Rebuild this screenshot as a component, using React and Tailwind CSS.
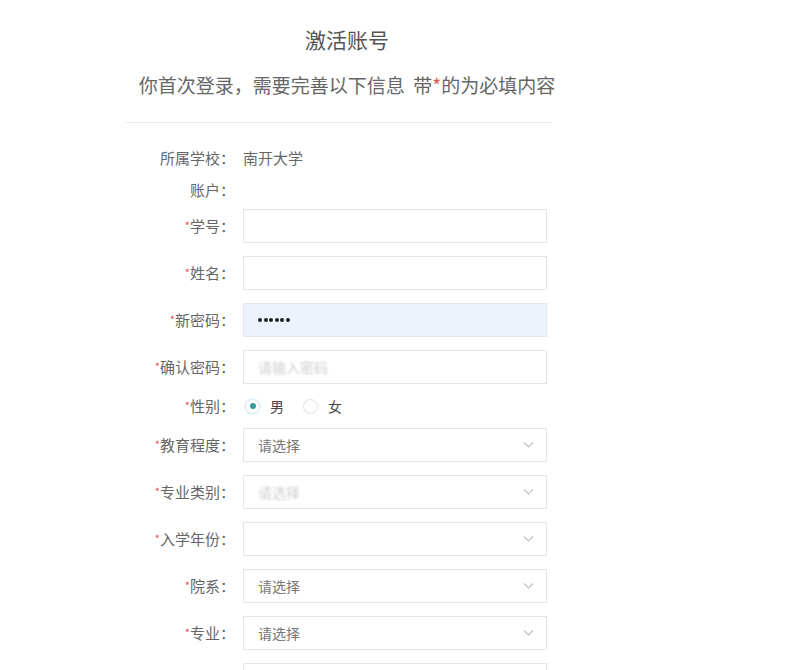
import React from 'react';

const font = { fontFamily: '"Noto Sans CJK SC", "Noto Sans", sans-serif' };

function Label({ text, required }) {
  return (
    <div className="w-[110px] shrink-0 text-right text-[15px] text-[#666] leading-6">
      {required && <span className="text-[#e0575b] text-[11px] align-top relative top-[-1px]">*</span>}
      {text && `${text}：`}
    </div>
  );
}

function Chevron() {
  return (
    <svg width="11" height="7" viewBox="0 0 11 7" className="absolute right-[12px] top-1/2 -translate-y-1/2">
      <path d="M1 1l4.5 4.5L10 1" fill="none" stroke="#c0c0c0" strokeWidth="1.1" />
    </svg>
  );
}

function InputRow({ label, value, filled, password, select, faded, required = true }) {
  return (
    <div className="flex items-center mt-[13px]">
      <Label text={label} required={required} />
      <div
        className={`relative ml-[8px] w-[304px] h-[34px] border border-[#e6e6e6] flex items-center px-[14px] text-[14px] ${
          filled ? 'bg-[#edf3fd]' : 'bg-white'
        }`}
      >
        {password && (
          <div className="flex gap-[1.5px]">
            {[0, 1, 2, 3, 4, 5].map((i) => (
              <span key={i} className="w-[4px] h-[4px] rounded-full bg-[#222]" />
            ))}
          </div>
        )}
        {value && <span className="text-[#777]">{value}</span>}
        {faded && <span className="text-[#cfcfcf] blur-[1px]">{faded}</span>}
        {select && <Chevron />}
      </div>
    </div>
  );
}

export default function App() {
  return (
    <div className="min-h-screen bg-white pl-[125px] pt-[25px]" style={font}>
      <div className="w-[444px] text-center">
        <h1 className="text-[21px] leading-7 text-[#555] font-normal">激活账号</h1>
        <p className="mt-[19px] text-[19px] leading-[26px] text-[#666]">
          你首次登录，需要完善以下信息&nbsp;&nbsp;带<span className="text-[#e0575b]">*</span>的为必填内容
        </p>
      </div>
      <div className="mt-[24px] w-[427px] h-px bg-[#ededed]" />

      <div className="mt-[23px] flex items-center">
        <Label text="所属学校" />
        <div className="ml-[8px] text-[15px] text-[#666] leading-6">南开大学</div>
      </div>
      <div className="mt-[8px] flex items-center">
        <Label text="账户" />
      </div>

      <div className="mt-[-6px]">
        <InputRow label="学号" />
        <InputRow label="姓名" />
        <InputRow label="新密码" filled password />
        <InputRow label="确认密码" faded="请输入密码" />

        <div className="flex items-center mt-[13px] h-[18px]">
          <Label text="性别" required />
          <div className="ml-[10px] flex items-center text-[14px] text-[#444]">
            <span className="w-[15px] h-[15px] rounded-full border border-[#cfe6ee] shadow-[0_0_3px_#cde8f2] flex items-center justify-center">
              <span className="w-[6px] h-[6px] rounded-full bg-[#3a9a9a]" />
            </span>
            <span className="ml-[10px]">男</span>
            <span className="ml-[19px] w-[15px] h-[15px] rounded-full border border-[#e0e0e0]" />
            <span className="ml-[10px]">女</span>
          </div>
        </div>

        <InputRow label="教育程度" value="请选择" select />
        <InputRow label="专业类别" faded="请选择" select />
        <InputRow label="入学年份" select />
        <InputRow label="院系" value="请选择" select />
        <InputRow label="专业" value="请选择" select />
        <InputRow label="" required={false} />
      </div>
    </div>
  );
}
